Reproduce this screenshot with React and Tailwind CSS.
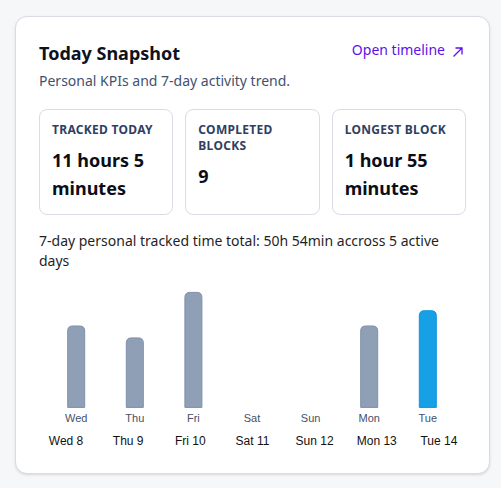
import React from 'react';

const kpis = [
  { label: 'Tracked today', value: '11 hours 5 minutes' },
  { label: 'Completed blocks', value: '9' },
  { label: 'Longest block', value: '1 hour 55 minutes' },
];

// minutes tracked per day, last 7 days
const days = [
  { short: 'Wed', label: 'Wed 8', minutes: 560 },
  { short: 'Thu', label: 'Thu 9', minutes: 478 },
  { short: 'Fri', label: 'Fri 10', minutes: 791 },
  { short: 'Sat', label: 'Sat 11', minutes: 0 },
  { short: 'Sun', label: 'Sun 12', minutes: 0 },
  { short: 'Mon', label: 'Mon 13', minutes: 560 },
  { short: 'Tue', label: 'Tue 14', minutes: 665, today: true },
];

const CHART_W = 427;
const CHART_H = 156;
const BASE = 136.4;
const MAX_H = 115;
const BAND = 58.6;
const FIRST = 37.2;
const BAR_W = 17;

function barPath(x, top, w, bottom, r) {
  return `M${x},${bottom} V${top + r} Q${x},${top} ${x + r},${top} H${x + w - r} Q${x + w},${top} ${x + w},${top + r} V${bottom} Z`;
}

function WeekChart() {
  const max = Math.max(...days.map((d) => d.minutes));
  return (
    <svg width={CHART_W} height={CHART_H} className="block">
      {days.map((d, i) => {
        const cx = FIRST + BAND * i;
        const h = (d.minutes / max) * MAX_H;
        return (
          <g key={d.short}>
            {h > 0 && (
              <path
                d={barPath(cx - BAR_W / 2, BASE - h, BAR_W, BASE, 5)}
                fill={d.today ? '#16a1e7' : '#8f9fb6'}
                stroke={d.today ? '#0f93dc' : '#7f90ab'}
                strokeWidth="1"
              />
            )}
            <text
              x={cx}
              y={151.4}
              textAnchor="middle"
              fontSize="11"
              fill="#44516b"
              fontFamily="'Liberation Sans', Arial, sans-serif"
            >
              {d.short}
            </text>
          </g>
        );
      })}
    </svg>
  );
}

export default function App() {
  return (
    <div
      className="min-h-screen bg-[#f6f7f9] pl-[15px] pt-4"
      style={{ fontFamily: "'Noto Sans', sans-serif" }}
    >
      <div className="w-[475px] rounded-xl border border-[#d9dce5] bg-white px-[23px] pt-[22px] pb-6 shadow-sm">
        <div className="flex items-start justify-between">
          <div>
            <h2 className="text-lg font-bold leading-7 text-[#0e1120]">Today Snapshot</h2>
            <p className="mt-1 text-sm leading-5 text-[#41526f]">
              Personal KPIs and 7-day activity trend.
            </p>
          </div>
          <a href="#" className="mt-[1px] flex items-center gap-[5px] text-sm leading-5 text-[#5b12e8]">
            Open timeline
            <svg width="16" height="16" viewBox="0 0 16 16" className="translate-y-[2px]" fill="none" stroke="currentColor" strokeWidth="1.3">
              <path d="M3.5 12.5 L12 4 M5.5 4 H12 V10.5" />
            </svg>
          </a>
        </div>

        <div className="mt-[18px] grid grid-cols-3 gap-3">
          {kpis.map((k) => (
            <div key={k.label} className="rounded-lg border border-[#d9dce5] p-3">
              <div className="text-xs font-bold uppercase leading-4 tracking-wide text-[#2f4062]">
                {k.label}
              </div>
              <div className="mt-2 text-lg font-bold leading-7 text-[#0b0e17]">{k.value}</div>
            </div>
          ))}
        </div>

        <p className="mt-4 text-sm leading-5 text-[#1f1f1f]">
          7-day personal tracked time total: 50h 54min accross 5 active days
        </p>

        <WeekChart />

        <div
          className="-mx-1 mt-[6px] grid grid-cols-7 text-center text-[12px] leading-4 text-[#111]"
          style={{ fontFamily: "'Liberation Sans', Arial, sans-serif" }}
        >
          {days.map((d) => (
            <span key={d.label}>{d.label}</span>
          ))}
        </div>
      </div>
    </div>
  );
}
